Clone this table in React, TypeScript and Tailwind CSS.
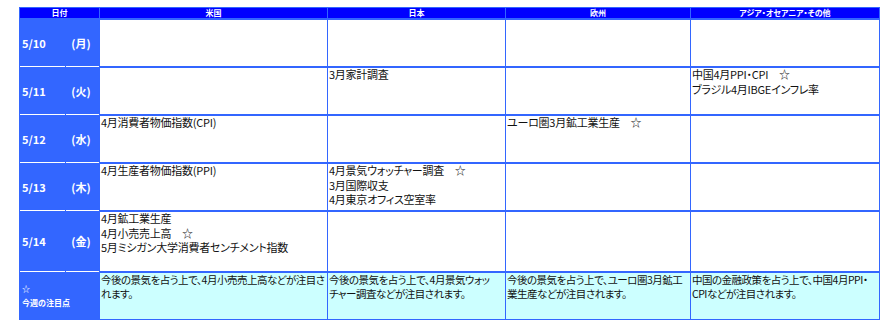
import React from "react"

type Row = {
  date: string
  wd: string
  us: string[]
  jp: string[]
  eu: string[]
  as: string[]
}

const rows: Row[] = [
  { date: "5/10", wd: "(月)", us: [], jp: [], eu: [], as: [] },
  {
    date: "5/11",
    wd: "(火)",
    us: [],
    jp: ["3月家計調査"],
    eu: [],
    as: ["中国4月PPI・CPI　☆", "ブラジル4月IBGEインフレ率"],
  },
  {
    date: "5/12",
    wd: "(水)",
    us: ["4月消費者物価指数(CPI)"],
    jp: [],
    eu: ["ユーロ圏3月鉱工業生産　☆"],
    as: [],
  },
  {
    date: "5/13",
    wd: "(木)",
    us: ["4月生産者物価指数(PPI)"],
    jp: ["4月景気ウォッチャー調査　☆", "3月国際収支", "4月東京オフィス空室率"],
    eu: [],
    as: [],
  },
  {
    date: "5/14",
    wd: "(金)",
    us: ["4月鉱工業生産", "4月小売売上高　☆", "5月ミシガン大学消費者センチメント指数"],
    jp: [],
    eu: [],
    as: [],
  },
]

const notes = [
  ["今後の景気を占う上で、4月小売売上高などが注目さ", "れます。"],
  ["今後の景気を占う上で、4月景気ウォッ", "チャー調査などが注目されます。"],
  ["今後の景気を占う上で、ユーロ圏3月鉱工", "業生産などが注目されます。"],
  ["中国の金融政策を占う上で、中国4月PPI・", "CPIなどが注目されます。"],
]

const headers = ["米国", "日本", "欧州", "アジア・オセアニア・その他"]

function Cell({ lines }: { lines: string[] }) {
  return (
    <div className="bg-white pl-px text-[11px] leading-[14.5px] tracking-[-0.25px] text-[#111] whitespace-nowrap">
      <div className="-mt-px">
        {lines.map((l, i) => (
          <div key={i}>{l}</div>
        ))}
      </div>
    </div>
  )
}

export default function App() {
  return (
    <div className="bg-white w-[896px] h-[323px] pt-[7px] pl-[19px] font-['Noto_Sans_CJK_JP',sans-serif] [font-feature-settings:'palt']">
      <div className="w-[861px] bg-[#3366ff] p-px grid grid-cols-[45px_33px_227px_177px_184px_188px] grid-rows-[10px_46px_46px_46px_46px_59px_46px] gap-x-px gap-y-[2px]">
        {/* header */}
        <div className="col-span-2 bg-[#0000ff] text-white font-bold text-[8px] leading-[10px] text-center">日付</div>
        {headers.map((h) => (
          <div key={h} className="bg-[#0000ff] text-white font-bold text-[8px] leading-[10px] text-center">
            {h}
          </div>
        ))}

        {rows.map((r) => (
          <React.Fragment key={r.date}>
            <div className="bg-[#3366ff] shadow-[0_1px_0_#fff] flex items-center pl-[2px] text-white font-bold text-[11px]">
              {r.date}
            </div>
            <div className="bg-[#3366ff] shadow-[0_1px_0_#fff] flex items-center justify-center pr-[3px] text-white font-bold text-[11px]">
              {r.wd}
            </div>
            <Cell lines={r.us} />
            <Cell lines={r.jp} />
            <Cell lines={r.eu} />
            <Cell lines={r.as} />
          </React.Fragment>
        ))}

        {/* notes row */}
        <div className="col-span-2 bg-[#3366ff] flex flex-col justify-center pl-[2px] text-white font-bold text-[8px] leading-[14px]">
          <div>☆</div>
          <div>今週の注目点</div>
        </div>
        {notes.map((n, i) => (
          <div key={i} className="bg-[#ccffff] pl-px text-[10.5px] leading-[14px] tracking-[-0.5px] text-[#111] whitespace-nowrap">
            <div>{n[0]}</div>
            <div>{n[1]}</div>
          </div>
        ))}
      </div>
    </div>
  )
}
